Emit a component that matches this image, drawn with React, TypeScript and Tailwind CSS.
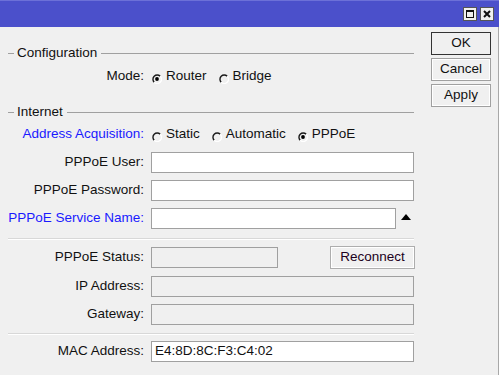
import React from "react";

const font = { fontFamily: '"Liberation Sans", Arial, sans-serif' };

function Radio({ checked }: { checked?: boolean }) {
  return (
    <svg width="10" height="10" viewBox="0 0 10 10" className="shrink-0 mt-[5px]">
      <path d="M8.2 2.2 A4.2 4.2 0 1 0 2.2 8.2" fill="none" stroke="#1a1a1a" strokeWidth="1.4" />
      <path d="M2.2 8.2 A4.2 4.2 0 0 0 8.2 2.2" fill="none" stroke="#ffffff" strokeWidth="1.4" />
      {checked && <circle cx="5" cy="5" r="1.9" fill="#000" />}
    </svg>
  );
}

function RadioItem({ label, checked }: { label: string; checked?: boolean }) {
  return (
    <div className="flex items-center gap-[4px]">
      <Radio checked={checked} />
      <span>{label}</span>
    </div>
  );
}

function Legend({ title }: { title: string }) {
  return (
    <div className="flex items-center h-[16px] w-[406px]">
      <div className="w-[6px] h-px bg-[#a0a0a0]" />
      <span className="ml-[3px] leading-[16px]">{title}</span>
      <div className="ml-[4px] flex-1 h-px bg-[#a0a0a0]" />
    </div>
  );
}

function Label({ text, blue }: { text: string; blue?: boolean }) {
  return (
    <div
      className={
        "w-[136px] shrink-0 text-right whitespace-nowrap " + (blue ? "text-[#1a1aff]" : "text-[#111]")
      }
    >
      {text}
    </div>
  );
}

function Separator() {
  return <div className="w-[406px] h-[2px] border-t border-[#d8d8d8] border-b border-b-white" />;
}

export default function App() {
  return (
    <div
      className="w-[499px] h-[375px] bg-[#f0f0f0] text-[13.5px] text-[#111] overflow-hidden flex flex-col"
      style={font}
    >
      {/* Title bar */}
      <div className="h-[27px] shrink-0 bg-[#4b50cb] border-t border-[#6c70d8] flex items-start justify-end pr-[5px] pt-[6px] gap-[3px]">
        <div className="w-[14px] h-[14px] bg-[#f0f0f0] border border-[#555] flex items-center justify-center">
          <div className="w-[8px] h-[8px] border border-[#111] border-t-2" />
        </div>
        <div className="w-[14px] h-[14px] bg-[#f0f0f0] border border-[#555] flex items-center justify-center">
          <svg width="8" height="8" viewBox="0 0 8 8">
            <path d="M1 1 L7 7 M7 1 L1 7" stroke="#111" strokeWidth="2" />
          </svg>
        </div>
      </div>

      <div className="flex-1 flex border-r border-[#a8a8a8]">
        {/* Main form */}
        <div className="pl-[8px] flex flex-col w-[423px]">
          <div className="mt-[18px]">
            <Legend title="Configuration" />
          </div>
          <div className="mt-[5px] h-[20px] flex items-center">
            <Label text="Mode:" />
            <div className="ml-[8px] flex items-center gap-[12px]">
              <RadioItem label="Router" checked />
              <RadioItem label="Bridge" />
            </div>
          </div>

          <div className="mt-[18px]">
            <Legend title="Internet" />
          </div>
          <div className="mt-[4px] h-[20px] flex items-center">
            <Label text="Address Acquisition:" blue />
            <div className="ml-[8px] flex items-center gap-[12px]">
              <RadioItem label="Static" />
              <RadioItem label="Automatic" />
              <RadioItem label="PPPoE" checked />
            </div>
          </div>

          <div className="mt-[8px] h-[21px] flex items-center">
            <Label text="PPPoE User:" />
            <div className="ml-[7px] w-[263px] h-[21px] bg-white border border-[#a0a0a0]" />
          </div>
          <div className="mt-[7px] h-[21px] flex items-center">
            <Label text="PPPoE Password:" />
            <div className="ml-[7px] w-[263px] h-[21px] bg-white border border-[#a0a0a0]" />
          </div>
          <div className="mt-[7px] h-[21px] flex items-center">
            <Label text="PPPoE Service Name:" blue />
            <div className="ml-[7px] w-[245px] h-[21px] bg-white border border-[#a0a0a0]" />
            <svg width="10" height="6" viewBox="0 0 10 6" className="ml-[5px] mt-[-3px]">
              <path d="M0 6 L5 0 L10 6 Z" fill="#000" />
            </svg>
          </div>

          <div className="mt-[9px]">
            <Separator />
          </div>

          <div className="mt-[6px] h-[23px] flex items-center">
            <Label text="PPPoE Status:" />
            <div className="ml-[7px] w-[127px] h-[21px] bg-[#f0f0f0] border border-[#a0a0a0]" />
            <div className="ml-[52px] w-[85px] h-[23px] border border-[#adadad] bg-[#f0f0f0] flex items-center justify-center">
              <div className="w-full h-full border border-white flex items-center justify-center text-[#200020]">
                Reconnect
              </div>
            </div>
          </div>
          <div className="mt-[7px] h-[21px] flex items-center">
            <Label text="IP Address:" />
            <div className="ml-[7px] w-[263px] h-[21px] bg-[#f0f0f0] border border-[#a0a0a0]" />
          </div>
          <div className="mt-[7px] h-[21px] flex items-center">
            <Label text="Gateway:" />
            <div className="ml-[7px] w-[263px] h-[21px] bg-[#f0f0f0] border border-[#a0a0a0]" />
          </div>

          <div className="mt-[8px]">
            <Separator />
          </div>

          <div className="mt-[6px] h-[21px] flex items-center">
            <Label text="MAC Address:" />
            <div className="ml-[7px] w-[263px] h-[21px] bg-white border border-[#a0a0a0] flex items-center pl-[3px]">
              E4:8D:8C:F3:C4:02
            </div>
          </div>
        </div>

        {/* Buttons */}
        <div className="ml-[8px] mt-[5px] flex flex-col gap-[3px]">
          <div className="w-[60px] h-[23px] border border-[#333] bg-[#f0f0f0] flex items-center justify-center">
            OK
          </div>
          <div className="w-[60px] h-[23px] border border-[#a0a0a0] bg-[#f0f0f0]">
            <div className="w-full h-full border border-white flex items-center justify-center">
              Cancel
            </div>
          </div>
          <div className="w-[60px] h-[23px] border border-[#a0a0a0] bg-[#f0f0f0]">
            <div className="w-full h-full border border-white flex items-center justify-center">
              Apply
            </div>
          </div>
        </div>
      </div>
    </div>
  );
}
